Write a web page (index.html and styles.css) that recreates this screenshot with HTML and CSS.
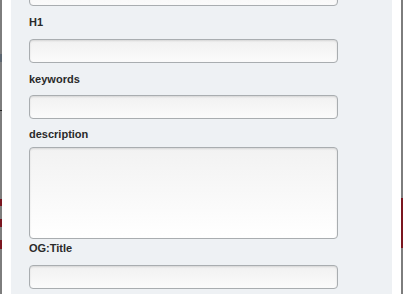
FILE: index.html
```html
<!DOCTYPE html>
<html>
<head>
<meta charset="utf-8">
<link rel="stylesheet" href="styles.css">
</head>
<body>
<div class="page">
  <div class="edge edge-left">
    <span class="mark mark-dark m1"></span>
    <span class="mark mark-dark m2"></span>
    <span class="mark mark-red m3"></span>
    <span class="mark mark-red m4"></span>
    <span class="mark mark-red m5"></span>
  </div>
  <div class="gutter"></div>
  <div class="panel">
    <form class="form">
      <input class="field field-first" type="text">
      <label class="label label-h1">H1</label>
      <input class="field" type="text">
      <label class="label">keywords</label>
      <input class="field field-before-desc" type="text">
      <label class="label label-desc">description</label>
      <textarea class="area"></textarea>
      <label class="label label-og">OG:Title</label>
      <input class="field" type="text">
    </form>
  </div>
  <div class="gutter"></div>
  <div class="edge edge-right">
    <span class="mark mark-red r1"></span>
  </div>
</div>
</body>
</html>
```

FILE: styles.css
```css
html, body {
  margin: 0;
  padding: 0;
  height: 294px;
  overflow: hidden;
  background: #ffffff;
}

.page {
  display: flex;
  height: 294px;
  font-family: "Liberation Sans", Arial, sans-serif;
}

.edge {
  width: 2px;
  background: #7d7d7d;
  position: relative;
  flex: none;
}

.mark {
  position: absolute;
  left: 0;
  width: 2px;
}

.mark-dark { background: #444; }
.mark-red { background: #7a1620; }

.m1 { top: 54px; height: 8px; background: #5c6670; }
.m2 { top: 110px; height: 1px; background: #222; }
.m3 { top: 199px; height: 7px; }
.m4 { top: 219px; height: 8px; }
.m5 { top: 240px; height: 9px; }

.r1 { top: 198px; height: 50px; }

.gutter {
  width: 9px;
  flex: none;
  background: #ffffff;
}

.panel {
  flex: 1;
  background: #eef1f4;
  padding: 0 53px 0 18px;
}

.form {
  display: flex;
  flex-direction: column;
  margin-top: -18px;
}

.field,
.area {
  box-sizing: border-box;
  display: block;
  width: 309px;
  margin: 0 0 8px 0;
  padding: 0;
  border: 1px solid #a9adb0;
  border-radius: 4px;
  background: linear-gradient(#f1f1f1, #fbfbfb);
  box-shadow: inset 0 1px 2px rgba(0, 0, 0, 0.12);
  font: inherit;
}

.field {
  height: 24px;
}

.field-before-desc {
  margin-bottom: 7px;
}

.area {
  height: 92px;
  resize: none;
  margin-bottom: 1px;
  background: linear-gradient(#f2f2f2, #ffffff);
}

.label {
  display: block;
  font-size: 11px;
  font-weight: bold;
  line-height: 16px;
  color: #2a2a2a;
  margin: 0 0 8px 0;
}

.label-h1 {
  margin-bottom: 9px;
}

.label-desc {
  margin-bottom: 5px;
}

.label-og {
  margin-bottom: 9px;
}
```
